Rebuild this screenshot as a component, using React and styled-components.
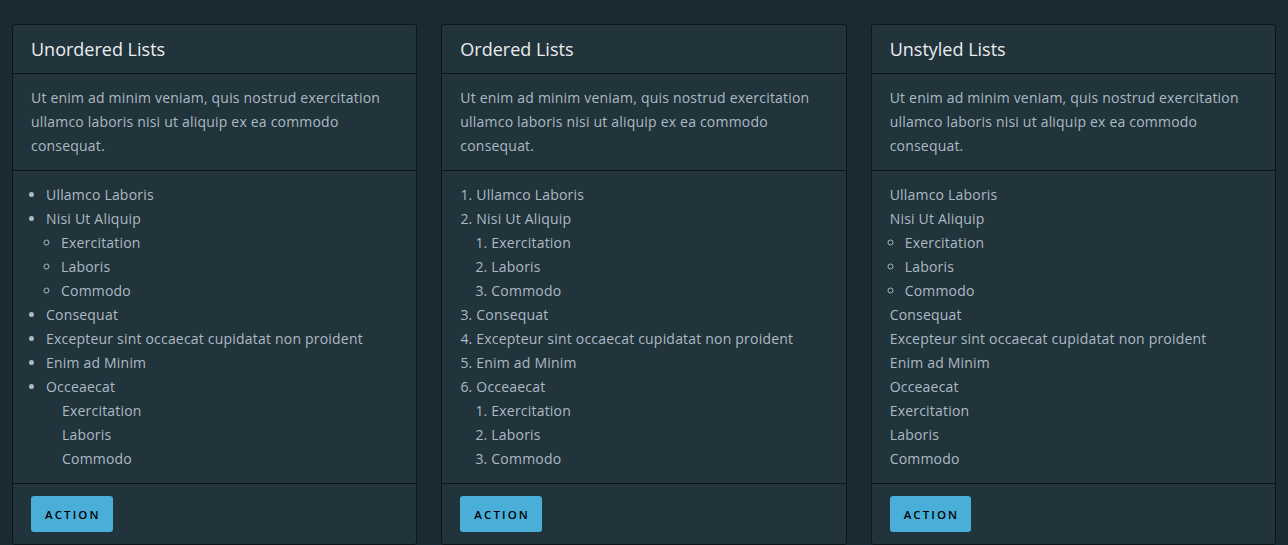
import React from "react";
import styled, { createGlobalStyle } from "styled-components";

const Global = createGlobalStyle`
  html, body { margin: 0; padding: 0; background: #1b2a32; }
  body { font-family: "Open Sans", "Noto Sans", sans-serif; color: #acbac3; }
`;

const Page = styled.div`
  display: grid;
  grid-template-columns: repeat(3, 1fr);
  gap: 24px;
  padding: 24px 12px 0;
  height: 545px;
  box-sizing: border-box;
  overflow: hidden;
`;

const Card = styled.div`
  background: #21333b;
  border: 1px solid #0c161b;
  border-radius: 3px;
  display: flex;
  flex-direction: column;
  align-self: start;
`;

const Header = styled.div`
  padding: 12px 18px;
  font-size: 18px;
  line-height: 24px;
  color: #eaedf0;
  border-bottom: 1px solid #0c161b;
`;

const Block = styled.div`
  padding: 12px 18px;
  font-size: 14px;
  line-height: 24px;
  letter-spacing: 0.2px;
  color: #acbac3;
  border-bottom: 1px solid #0c161b;
`;

const Text = styled.p`
  margin: 0;
`;

const UL = styled.ul`
  margin: 0;
  padding: 0 0 0 ${(p) => (p.$unstyled ? 0 : 15)}px;
  list-style: ${(p) => (p.$unstyled ? "none" : "disc")};
`;

const NestedUL = styled.ul`
  margin: 0;
  padding: 0 0 0 ${(p) => (p.$plain ? 16 : 15)}px;
  list-style: ${(p) => (p.$plain ? "none" : "circle")};
`;

const OL = styled.ol`
  margin: 0;
  padding: 0 0 0 ${(p) => (p.$nested ? 15 : 16)}px;
`;

const Item = styled.li`
  line-height: 24px;
`;

const Footer = styled.div`
  padding: 12px 18px;
`;

const Button = styled.button`
  height: 36px;
  padding: 0 12px 0 14px;
  border: none;
  border-radius: 3px;
  background: #49afd9;
  color: #000;
  font-family: "Open Sans", "Noto Sans", sans-serif;
  font-size: 11.5px;
  font-weight: 600;
  letter-spacing: 2.1px;
  text-transform: uppercase;
  cursor: pointer;
`;

const para =
  "Ut enim ad minim veniam, quis nostrud exercitation ullamco laboris nisi ut aliquip ex ea commodo consequat.";
const sub = ["Exercitation", "Laboris", "Commodo"];

function CardShell({ title, children }) {
  return (
    <Card>
      <Header>{title}</Header>
      <Block>
        <Text>{para}</Text>
      </Block>
      <Block>{children}</Block>
      <Footer>
        <Button>Action</Button>
      </Footer>
    </Card>
  );
}

export default function App() {
  return (
    <>
      <Global />
      <Page>
        <CardShell title="Unordered Lists">
          <UL>
            <Item>Ullamco Laboris</Item>
            <Item>
              Nisi Ut Aliquip
              <NestedUL>
                {sub.map((s) => (
                  <Item key={s}>{s}</Item>
                ))}
              </NestedUL>
            </Item>
            <Item>Consequat</Item>
            <Item>Excepteur sint occaecat cupidatat non proident</Item>
            <Item>Enim ad Minim</Item>
            <Item>
              Occeaecat
              <NestedUL $plain>
                {sub.map((s) => (
                  <Item key={s}>{s}</Item>
                ))}
              </NestedUL>
            </Item>
          </UL>
        </CardShell>
        <CardShell title="Ordered Lists">
          <OL>
            <Item>Ullamco Laboris</Item>
            <Item>
              Nisi Ut Aliquip
              <OL $nested>
                {sub.map((s) => (
                  <Item key={s}>{s}</Item>
                ))}
              </OL>
            </Item>
            <Item>Consequat</Item>
            <Item>Excepteur sint occaecat cupidatat non proident</Item>
            <Item>Enim ad Minim</Item>
            <Item>
              Occeaecat
              <OL $nested>
                {sub.map((s) => (
                  <Item key={s}>{s}</Item>
                ))}
              </OL>
            </Item>
          </OL>
        </CardShell>
        <CardShell title="Unstyled Lists">
          <UL $unstyled>
            <Item>Ullamco Laboris</Item>
            <Item>
              Nisi Ut Aliquip
              <NestedUL>
                {sub.map((s) => (
                  <Item key={s}>{s}</Item>
                ))}
              </NestedUL>
            </Item>
            <Item>Consequat</Item>
            <Item>Excepteur sint occaecat cupidatat non proident</Item>
            <Item>Enim ad Minim</Item>
            <Item>Occeaecat</Item>
            {sub.map((s) => (
              <Item key={s}>{s}</Item>
            ))}
          </UL>
        </CardShell>
      </Page>
    </>
  );
}
